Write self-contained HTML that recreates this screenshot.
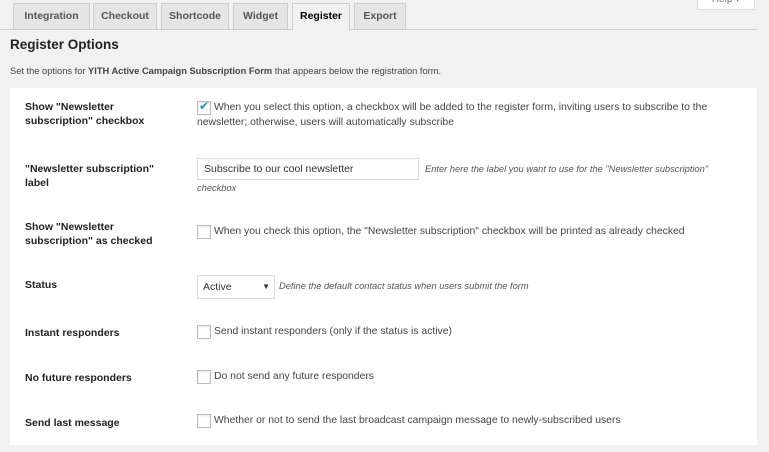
<!DOCTYPE html>
<html><head><style>
body{margin:0;width:769px;height:452px;background:#f1f1f1;font-family:"Liberation Sans",sans-serif;color:#444;position:relative;overflow:hidden;font-size:11px}
.a{position:absolute}
.tab{position:absolute;top:3px;height:26px;background:#e5e5e5;border:1px solid #ccc;border-bottom:none;font-weight:bold;font-size:10.5px;color:#555;text-align:center;line-height:25px;box-sizing:border-box}
.tab.on{background:#f1f1f1;color:#000;height:27px}
.lbl{position:absolute;left:25px;font-weight:bold;color:#222;font-size:10.5px;line-height:14px}
.txt{position:absolute;font-size:10.4px;color:#444;line-height:15px;white-space:nowrap}
.cb{position:absolute;width:12px;height:12px;border:1px solid #bbb;background:#fff;box-shadow:inset 0 1px 2px rgba(0,0,0,.1)}
.it{font-style:italic;color:#555;font-size:9.3px;white-space:nowrap}
</style></head><body>
<div class="a" style="left:697px;top:-4px;width:56px;height:12px;background:#fff;border:1px solid #ddd;color:#777;text-align:center;font-size:10px;line-height:6px">Help ▾</div>
<div class="a" style="left:0;top:29px;width:757px;height:1px;background:#ccc"></div>
<div class="tab" style="left:13px;width:77px">Integration</div>
<div class="tab" style="left:93px;width:64px">Checkout</div>
<div class="tab" style="left:161px;width:68px">Shortcode</div>
<div class="tab" style="left:233px;width:55px">Widget</div>
<div class="tab on" style="left:292px;width:58px">Register</div>
<div class="tab" style="left:354px;width:52px">Export</div>
<div class="a" style="left:10px;top:37px;font-weight:bold;font-size:13.5px;color:#222">Register Options</div>
<div class="a" style="left:10px;top:66px;font-size:9.3px;color:#444">Set the options for <b>YITH Active Campaign Subscription Form</b> that appears below the registration form.</div>
<div class="a" style="left:10px;top:88px;width:747px;height:357px;background:#fff"></div>

<div class="lbl" style="top:100px">Show "Newsletter<br>subscription" checkbox</div>
<div class="cb" style="left:197px;top:101px"><span style="position:absolute;left:1px;top:-3px;color:#1e8cbe;font-size:12px">✔</span></div>
<div class="txt" style="left:214px;top:100px">When you select this option, a checkbox will be added to the register form, inviting users to subscribe to the</div>
<div class="txt" style="left:197px;top:115px">newsletter; otherwise, users will automatically subscribe</div>

<div class="lbl" style="top:162px">"Newsletter subscription"<br>label</div>
<div class="a" style="left:197px;top:158px;width:222px;height:22px;border:1px solid #ddd;box-sizing:border-box;font-size:10.5px;color:#333;line-height:20px;padding-left:6px">Subscribe to our cool newsletter</div>
<div class="a it" style="left:425px;top:164px">Enter here the label you want to use for the "Newsletter subscription"</div>
<div class="a it" style="left:197px;top:183px">checkbox</div>

<div class="lbl" style="top:220px">Show "Newsletter<br>subscription" as checked</div>
<div class="cb" style="left:197px;top:225px"></div>
<div class="txt" style="left:214px;top:224px">When you check this option, the "Newsletter subscription" checkbox will be printed as already checked</div>

<div class="lbl" style="top:278px">Status</div>
<div class="a" style="left:197px;top:275px;width:78px;height:24px;border:1px solid #ddd;box-sizing:border-box;font-size:10.5px;color:#333;line-height:22px;padding-left:5px">Active<span style="position:absolute;right:4px;font-size:8px">▼</span></div>
<div class="a it" style="left:279px;top:281px">Define the default contact status when users submit the form</div>

<div class="lbl" style="top:326px">Instant responders</div>
<div class="cb" style="left:197px;top:325px"></div>
<div class="txt" style="left:214px;top:324px">Send instant responders (only if the status is active)</div>

<div class="lbl" style="top:371px">No future responders</div>
<div class="cb" style="left:197px;top:370px"></div>
<div class="txt" style="left:214px;top:369px">Do not send any future responders</div>

<div class="lbl" style="top:416px">Send last message</div>
<div class="cb" style="left:197px;top:414px"></div>
<div class="txt" style="left:214px;top:413px">Whether or not to send the last broadcast campaign message to newly-subscribed users</div>
</body></html>
